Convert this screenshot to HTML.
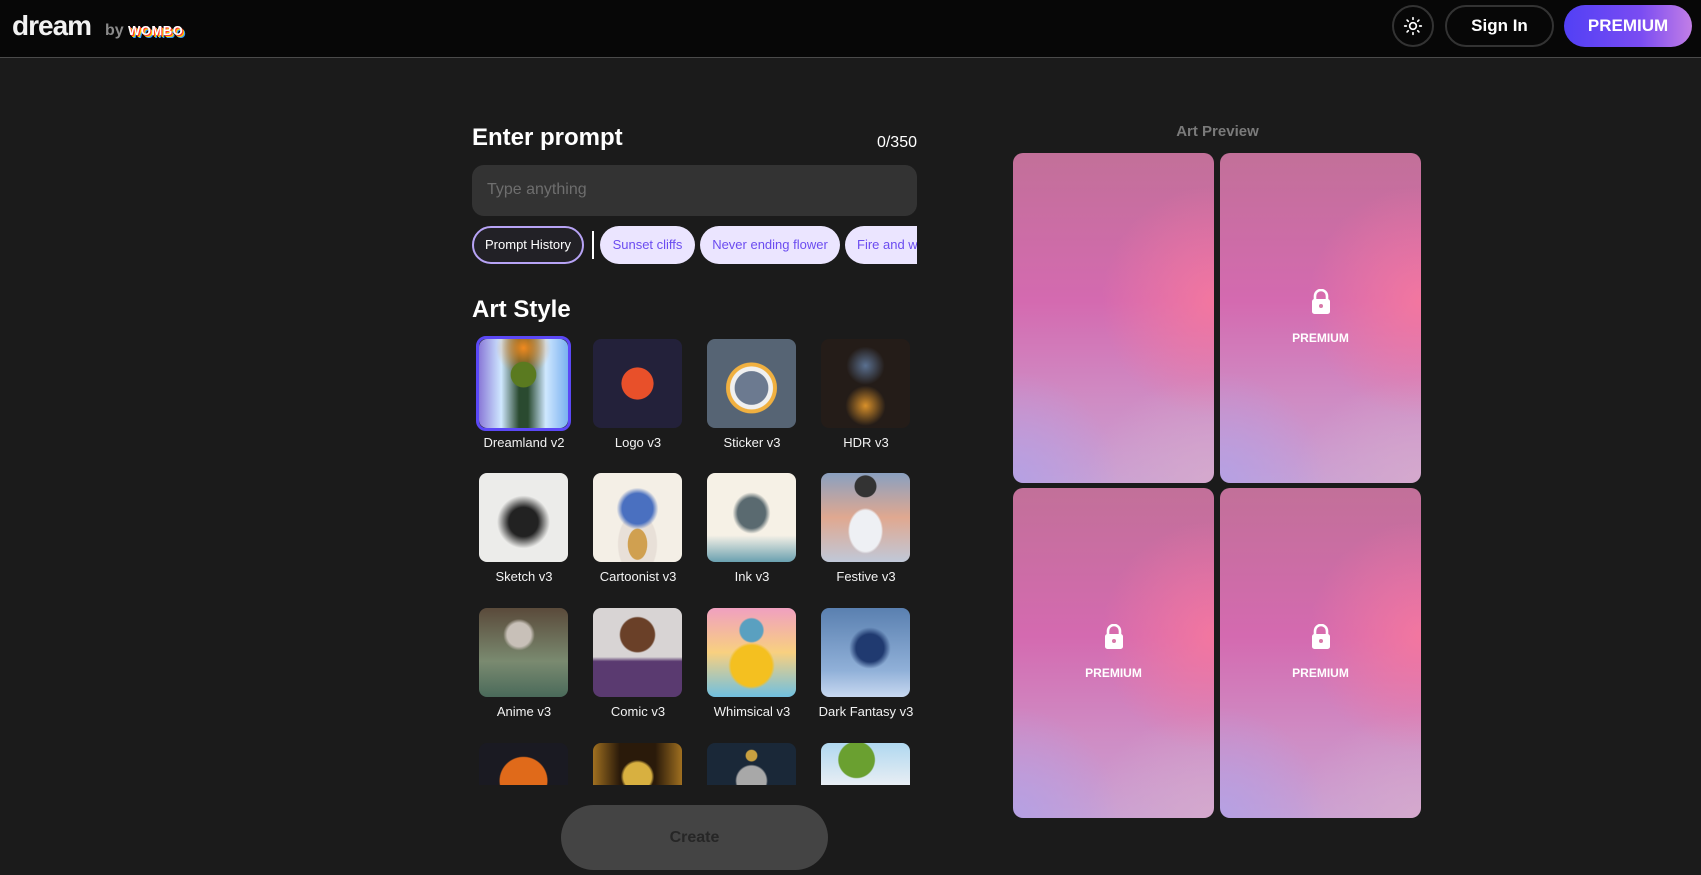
<!DOCTYPE html>
<html><head><meta charset="utf-8"><style>
*{margin:0;padding:0;box-sizing:border-box}
body{width:1701px;height:875px;background:#1b1b1b;font-family:"Liberation Sans",Arial,sans-serif;position:relative;overflow:hidden;color:#fff}
.abs{position:absolute}
header{position:absolute;left:0;top:0;width:1701px;height:58px;background:#070707;border-bottom:1px solid #4a4a4a}
.chip{position:absolute;top:226px;height:38px;border-radius:19px;font-size:13px;line-height:38px;text-align:center;white-space:nowrap;overflow:hidden}
.lav{background:#ebe5ff;color:#6b4cf0}
.tile{position:absolute;width:89px;height:89px;border-radius:8px;overflow:hidden}
.lbl{position:absolute;width:120px;text-align:center;font-size:13px;color:#f2f2f2}
.card{position:absolute;width:201px;height:330px;border-radius:10px;
background:
radial-gradient(ellipse 80% 50% at 100% 45%,rgba(246,120,158,.9),rgba(246,120,158,0) 70%),
radial-gradient(ellipse 70% 45% at 0% 100%,rgba(180,160,228,.95),rgba(180,160,228,0) 75%),
radial-gradient(ellipse 80% 40% at 100% 100%,rgba(214,170,204,.9),rgba(214,170,204,0) 80%),
linear-gradient(180deg,#c27099 0%,#d46ab0 45%,#cf8cc4 75%,#c9a0d4 100%)}
.card .lock{position:absolute;left:90px;top:136px}
.card .pt{position:absolute;width:100%;top:178px;text-align:center;font-size:12px;font-weight:bold}
</style></head><body>
<header>
 <div class="abs" style="left:12px;top:10px;font-size:28px;font-weight:bold;letter-spacing:-1px;color:#f2f2f2">dream</div>
 <div class="abs" style="left:105px;top:22px;font-size:16px;font-weight:bold;color:#8a8a8a">by</div>
 <div class="abs" style="left:128px;top:23px;font-size:13px;font-weight:900;color:#fff;letter-spacing:.5px;text-shadow:1px 1px 0 #f33,2px 2px 0 #fc0,3px 3px 0 #39f">WOMBO</div>
 <div class="abs" style="left:1392px;top:5px;width:42px;height:42px;border-radius:50%;border:2px solid #333;"></div>
 <svg class="abs" style="left:1403px;top:16px" width="20" height="20" viewBox="0 0 24 24" fill="none" stroke="#fff" stroke-width="2" stroke-linecap="round"><circle cx="12" cy="12" r="4"/><path d="M12 2v2M12 20v2M2 12h2M20 12h2M4.9 4.9l1.4 1.4M17.7 17.7l1.4 1.4M4.9 19.1l1.4-1.4M17.7 6.3l1.4-1.4"/></svg>
 <div class="abs" style="left:1445px;top:5px;width:109px;height:42px;border-radius:21px;border:2px solid #333;text-align:center;line-height:38px;font-size:17px;font-weight:bold">Sign In</div>
 <div class="abs" style="left:1564px;top:5px;width:128px;height:42px;border-radius:21px;background:linear-gradient(90deg,#5240f5,#7a4cf2 60%,#c27ee6);text-align:center;line-height:42px;font-size:17px;font-weight:bold">PREMIUM</div>
</header>

<div class="abs" style="left:472px;top:124px;font-size:24px;font-weight:bold">Enter prompt</div>
<div class="abs" style="left:860px;top:134px;width:57px;text-align:right;font-size:16px">0/350</div>
<div class="abs" style="left:472px;top:165px;width:445px;height:51px;border-radius:12px;background:#333;"></div>
<div class="abs" style="left:487px;top:181px;font-size:16px;color:#6e6e6e">Type anything</div>

<div class="chip" style="left:472px;width:112px;border:2px solid #b7a3f5;background:#222126;color:#fff;line-height:34px">Prompt History</div>
<div class="abs" style="left:592px;top:231px;width:2px;height:28px;background:#fff"></div>
<div class="chip lav" style="left:600px;width:95px">Sunset cliffs</div>
<div class="chip lav" style="left:700px;width:140px">Never ending flower</div>
<div class="abs" style="left:845px;top:226px;width:72px;height:38px;overflow:hidden"><div class="chip lav" style="left:0;top:0;width:100px;text-align:left;padding-left:12px">Fire and water</div></div>

<div class="abs" style="left:472px;top:296px;font-size:24px;font-weight:bold">Art Style</div>

<div class="abs" style="left:476px;top:336px;width:95px;height:95px;border-radius:10px;border:3px solid #5b48f6"></div>
<div class="tile" style="left:479px;top:339px;width:89px;height:89px;background:radial-gradient(circle at 50% 40%,#5a7a20 0 18%,transparent 19%),radial-gradient(circle at 50% 10%,#f08a20,transparent 30%),linear-gradient(90deg,#8a7ad8,#cfe8ff 25%,#2a4a30 45%,#2a4a30 55%,#cfe8ff 75%,#7ab0f0)"></div>
<div class="tile" style="left:593px;top:339px;background:radial-gradient(circle at 50% 50%,#e8502a 0 25%,transparent 26%),#23213a"></div>
<div class="tile" style="left:707px;top:339px;background:radial-gradient(circle at 50% 55%,#6c7a90 0 25%,#f0f0f0 26% 32%,#f0b040 33% 38%,transparent 39%),#566474"></div>
<div class="tile" style="left:821px;top:339px;background:radial-gradient(circle at 50% 30%,#5a7090,transparent 25%),radial-gradient(circle at 50% 75%,#d8902a,transparent 25%),#241c18"></div>
<div class="lbl" style="left:464px;top:435px">Dreamland v2</div>
<div class="lbl" style="left:578px;top:435px">Logo v3</div>
<div class="lbl" style="left:692px;top:435px">Sticker v3</div>
<div class="lbl" style="left:806px;top:435px">HDR v3</div>

<div class="tile" style="left:479px;top:473px;background:radial-gradient(circle at 50% 55%,#222 0 22%,transparent 40%),#ececea"></div>
<div class="tile" style="left:593px;top:473px;background:radial-gradient(circle at 50% 40%,#4a70c0 0 22%,transparent 30%),radial-gradient(ellipse at 50% 80%,#d0a050 0 15%,#e8e0d8 16% 30%,transparent 32%),#f4efe6"></div>
<div class="tile" style="left:707px;top:473px;background:radial-gradient(ellipse at 50% 45%,#5a6a70 0 22%,transparent 30%),linear-gradient(180deg,#f6f1e6 70%,#6aa0b0),#f6f1e6"></div>
<div class="tile" style="left:821px;top:473px;background:radial-gradient(ellipse at 50% 65%,#eef0f4 0 25%,transparent 28%),radial-gradient(circle at 50% 15%,#333 0 12%,transparent 13%),linear-gradient(180deg,#8aa0c0,#e0a890 50%,#c0c8d8)"></div>
<div class="lbl" style="left:464px;top:569px">Sketch v3</div>
<div class="lbl" style="left:578px;top:569px">Cartoonist v3</div>
<div class="lbl" style="left:692px;top:569px">Ink v3</div>
<div class="lbl" style="left:806px;top:569px">Festive v3</div>

<div class="tile" style="left:479px;top:608px;background:radial-gradient(circle at 45% 30%,#c8c0b8 0 15%,transparent 20%),linear-gradient(180deg,#5a4a3a,#7a8a70 60%,#4a6a5a)"></div>
<div class="tile" style="left:593px;top:608px;background:radial-gradient(circle at 50% 30%,#6a4028 0 22%,transparent 24%),linear-gradient(180deg,#d8d4d4 55%,#5a3a70 60%)"></div>
<div class="tile" style="left:707px;top:608px;background:radial-gradient(circle at 50% 65%,#f4c020 0 28%,transparent 32%),radial-gradient(circle at 50% 25%,#5aa0c0 0 14%,transparent 16%),linear-gradient(180deg,#f0a0c0,#f8d080 50%,#70c0e0)"></div>
<div class="tile" style="left:821px;top:608px;background:radial-gradient(circle at 55% 45%,#203a70 0 20%,transparent 30%),linear-gradient(180deg,#5a80b0,#90b0d8 70%,#c8d8f0)"></div>
<div class="lbl" style="left:464px;top:704px">Anime v3</div>
<div class="lbl" style="left:578px;top:704px">Comic v3</div>
<div class="lbl" style="left:692px;top:704px">Whimsical v3</div>
<div class="lbl" style="left:806px;top:704px">Dark Fantasy v3</div>

<div class="tile" style="left:479px;top:743px;height:42px;border-radius:8px 8px 0 0;background:radial-gradient(circle at 50% 90%,#e06a1a 0 40%,transparent 42%),#1a1a22"></div>
<div class="tile" style="left:593px;top:743px;height:42px;border-radius:8px 8px 0 0;background:radial-gradient(circle at 50% 80%,#d8b040 0 25%,transparent 30%),linear-gradient(90deg,#a07020,#2a1a0a 30%,#2a1a0a 70%,#a07020)"></div>
<div class="tile" style="left:707px;top:743px;height:42px;border-radius:8px 8px 0 0;background:radial-gradient(circle at 50% 90%,#a8a8a8 0 25%,transparent 28%),radial-gradient(circle at 50% 30%,#c8a040 0 10%,transparent 12%),#1a2838"></div>
<div class="tile" style="left:821px;top:743px;height:42px;border-radius:8px 8px 0 0;background:radial-gradient(circle at 40% 40%,#6aa030 0 30%,transparent 32%),linear-gradient(180deg,#b0d8f0,#e8eef4)"></div>

<div class="abs" style="left:561px;top:805px;width:267px;height:65px;border-radius:33px;background:#444;text-align:center;line-height:65px;font-size:16px;font-weight:bold;color:#262626">Create</div>

<div class="abs" style="left:1013px;top:123px;width:409px;text-align:center;font-size:15px;font-weight:bold;color:#7a7a7a">Art Preview</div>

<div class="card" style="left:1013px;top:153px"></div>
<div class="card" style="left:1220px;top:153px">
 <svg class="lock" width="22" height="26" viewBox="0 0 22 26"><path d="M5 11V7a6 6 0 0 1 12 0v4" fill="none" stroke="#fff" stroke-width="2.6"/><rect x="2" y="10" width="18" height="15" rx="2.5" fill="#fff"/><circle cx="11" cy="17" r="2" fill="#d878a8"/></svg>
 <div class="pt">PREMIUM</div></div>
<div class="card" style="left:1013px;top:488px">
 <svg class="lock" width="22" height="26" viewBox="0 0 22 26"><path d="M5 11V7a6 6 0 0 1 12 0v4" fill="none" stroke="#fff" stroke-width="2.6"/><rect x="2" y="10" width="18" height="15" rx="2.5" fill="#fff"/><circle cx="11" cy="17" r="2" fill="#d878a8"/></svg>
 <div class="pt">PREMIUM</div></div>
<div class="card" style="left:1220px;top:488px">
 <svg class="lock" width="22" height="26" viewBox="0 0 22 26"><path d="M5 11V7a6 6 0 0 1 12 0v4" fill="none" stroke="#fff" stroke-width="2.6"/><rect x="2" y="10" width="18" height="15" rx="2.5" fill="#fff"/><circle cx="11" cy="17" r="2" fill="#d878a8"/></svg>
 <div class="pt">PREMIUM</div></div>
</body></html>
